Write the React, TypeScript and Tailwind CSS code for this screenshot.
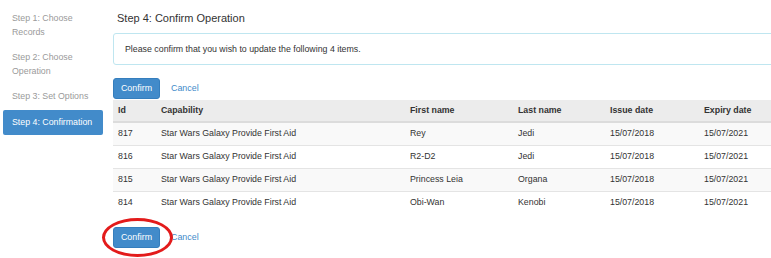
import React from "react";

const rows = [
  { id: "817", cap: "Star Wars Galaxy Provide First Aid", first: "Rey", last: "Jedi", issue: "15/07/2018", expiry: "15/07/2021" },
  { id: "816", cap: "Star Wars Galaxy Provide First Aid", first: "R2-D2", last: "Jedi", issue: "15/07/2018", expiry: "15/07/2021" },
  { id: "815", cap: "Star Wars Galaxy Provide First Aid", first: "Princess Leia", last: "Organa", issue: "15/07/2018", expiry: "15/07/2021" },
  { id: "814", cap: "Star Wars Galaxy Provide First Aid", first: "Obi-Wan", last: "Kenobi", issue: "15/07/2018", expiry: "15/07/2021" },
];

const steps = ["Step 1: Choose Records", "Step 2: Choose Operation", "Step 3: Set Options"];

export default function App() {
  return (
    <div
      className="relative w-[771px] h-[258px] overflow-hidden bg-white flex text-[#333]"
      style={{ fontFamily: '"Liberation Sans", Arial, sans-serif' }}
    >
      <div className="w-[103px] pl-[3px] pt-[6px] shrink-0 flex flex-col">
        {steps.map((s) => (
          <div key={s} className="pl-[9px] pr-[6px] py-[6px] text-[8.8px] leading-[13.5px] text-[#9a9a9a]">
            {s}
          </div>
        ))}
        <div className="pl-[9px] pr-[6px] py-[6px] text-[8.8px] leading-[13.5px] text-white bg-[#428bca] rounded-[2px]">
          Step 4: Confirmation
        </div>
      </div>
      <div className="ml-[10px] w-[700px] shrink-0 flex flex-col">
        <div className="pl-[4px] pt-[11px] text-[11px] leading-[15px] text-[#333]">Step 4: Confirm Operation</div>
        <div className="mt-[7px] h-[32px] border border-[#bfe6f0] rounded-[3px] flex items-center pl-[11px] pt-[2px] text-[8.8px] text-[#333]">
          Please confirm that you wish to update the following 4 items.
        </div>
        <div className="mt-[13px] flex items-center gap-[11px]">
          <button className="w-[47px] h-[21px] bg-[#428bca] text-white text-[8.9px] rounded-[3px] border border-[#357ebd]">
            Confirm
          </button>
          <span className="text-[8.9px] text-[#428bca]">Cancel</span>
        </div>
        <table className="mt-[1px] table-fixed w-[700px] border-collapse text-[8.8px]">
          <colgroup>
            <col className="w-[43px]" />
            <col className="w-[249px]" />
            <col className="w-[108px]" />
            <col className="w-[92px]" />
            <col className="w-[94px]" />
            <col />
          </colgroup>
          <thead>
            <tr className="bg-[#ececec] h-[22px] border-b-2 border-[#dcdcdc]">
              {["Id", "Capability", "First name", "Last name", "Issue date", "Expiry date"].map((h) => (
                <th key={h} className="text-left font-bold pl-[5px] py-0 text-[#333]">{h}</th>
              ))}
            </tr>
          </thead>
          <tbody>
            {rows.map((r, i) => (
              <tr key={r.id} className={`h-[23px] border-t border-[#e4e4e4] ${i % 2 === 0 ? "bg-[#f9f9f9]" : "bg-white"}`}>
                <td className="pl-[5px]">{r.id}</td>
                <td className="pl-[5px]">{r.cap}</td>
                <td className="pl-[5px]">{r.first}</td>
                <td className="pl-[5px]">{r.last}</td>
                <td className="pl-[5px]">{r.issue}</td>
                <td className="pl-[5px]">{r.expiry}</td>
              </tr>
            ))}
          </tbody>
        </table>
        <div className="mt-[13px] flex items-center gap-[11px]">
          <button className="w-[47px] h-[21px] bg-[#428bca] text-white text-[8.9px] rounded-[3px] border border-[#357ebd]">
            Confirm
          </button>
          <span className="text-[8.9px] text-[#428bca]">Cancel</span>
        </div>
      </div>
      <div className="absolute left-[102px] top-[218px] w-[71px] h-[39px] rounded-[50%] border-[3px] border-[#e31b1b]" />
    </div>
  );
}
